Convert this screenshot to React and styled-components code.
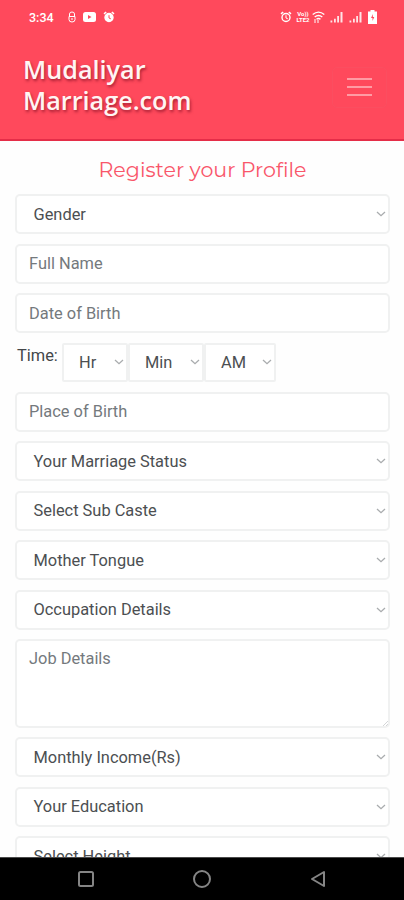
import React from "react";
import styled, { createGlobalStyle } from "styled-components";

const GlobalStyle = createGlobalStyle`
  * {
    box-sizing: border-box;
  }

  body {
    margin: 0;
    background-color: #fefefe;
    font-family: Roboto, "Liberation Sans", sans-serif;
  }
`;

const Screen = styled.div`
  display: flex;
  flex-direction: column;
  width: 404px;
  height: 900px;
  overflow: hidden;
`;

const Header = styled.header`
  flex: none;
  height: 141px;
  background-color: #ff495c;
  border-bottom: 2px solid #e52d48;
`;

const StatusBar = styled.div`
  display: flex;
  align-items: center;
  justify-content: space-between;
  height: 34px;
  padding: 0 27px 0 29px;
  color: #fff;
`;

const StatusGroup = styled.div`
  display: flex;
  align-items: center;
  gap: ${(props) => props.$gap};
`;

const Clock = styled.span`
  width: 32px;
  font-size: 12.5px;
  font-weight: 500;
`;

const Navbar = styled.nav`
  display: flex;
  align-items: center;
  justify-content: space-between;
  padding: 20px 17px 0 23px;
`;

const Brand = styled.div`
  display: flex;
  flex-direction: column;
  color: #fff5f4;
  font-family: "Open Sans", "Noto Sans", sans-serif;
  font-size: 25.2px;
  font-weight: 600;
  line-height: 30.5px;
  text-shadow: 1px 2px 3px rgba(120, 10, 30, 0.65);
`;

const Toggler = styled.button`
  display: flex;
  flex-direction: column;
  align-items: center;
  justify-content: center;
  gap: 6px;
  width: 55px;
  height: 41px;
  margin-top: 5px;
  padding: 0;
  border: 1px solid #fb4e60;
  border-radius: 5px;
  background: none;
`;

const TogglerLine = styled.span`
  width: 25px;
  height: 2px;
  background-color: #ff9ba4;
`;

const Form = styled.form`
  flex: 1;
  display: flex;
  flex-direction: column;
  gap: 9.4px;
  min-height: 0;
  padding: 16px 14px 0 15px;
  overflow: hidden;

  > * {
    flex: none;
  }
`;

const Title = styled.h1`
  margin: 0 0 3px;
  color: #f9566a;
  font-family: Montserrat, Inter, sans-serif;
  font-size: 20.6px;
  font-weight: 400;
  line-height: 25px;
  text-align: center;
`;

const Input = styled.input`
  width: 100%;
  height: 40px;
  padding: 0 12px;
  border: 2px solid #f0f1f1;
  border-radius: 5px;
  background-color: #fff;
  font-family: inherit;
  font-size: 16.4px;

  &::placeholder {
    color: #74797d;
    opacity: 1;
  }
`;

const TextArea = styled(Input)`
  height: 89px;
  padding: 8px 12px;
  line-height: 20px;
  resize: none;
`;

const TextAreaBox = styled.div`
  position: relative;
  display: flex;
`;

const Grip = styled.svg`
  position: absolute;
  right: 2px;
  bottom: 2px;
`;

const SelectBox = styled.div`
  display: flex;
  align-items: center;
  justify-content: space-between;
  width: ${(props) => props.$width || "100%"};
  height: ${(props) => (props.$width ? "39px" : "40px")};
  padding: 0 2px 0 ${(props) => (props.$width ? "15px" : "16.5px")};
  border: 2px solid #f0f1f1;
  border-radius: ${(props) => (props.$width ? "2px" : "5px")};
  background-color: #fff;
  color: #4c4f52;
  font-size: 16.4px;
`;

const TimeRow = styled.div`
  display: flex;
  height: 40px;
`;

const TimeLabel = styled.label`
  width: 47px;
  padding: 3px 0 0 2px;
  color: #434649;
  font-size: 16.4px;
  line-height: 20px;
`;

const NavigationBar = styled.footer`
  flex: none;
  display: flex;
  align-items: center;
  justify-content: space-between;
  height: 43px;
  padding: 0 76px;
  border-top: 1px solid #4a4a4a;
  background-color: #000;
`;

const Select = ({ label, width }) => (
  <SelectBox $width={width}>
    <span>{label}</span>
    <svg width="10" height="6" viewBox="0 0 10 6" fill="none">
      <path d="M1 1 5 4.7 9 1" stroke="#a9acae" strokeWidth="1.3" />
    </svg>
  </SelectBox>
);

const AlarmIcon = ({ filled }) => (
  <svg width="12" height="12" viewBox="0 0 12 12" fill="none" stroke="currentColor">
    <circle cx="6" cy="6.5" r="4" strokeWidth="1.4" fill={filled ? "currentColor" : "none"} />
    <path d="M1 2.8 3.2 1M11 2.8 8.8 1" strokeWidth="1.5" />
    <path d="M6 4.2V7l1.8.8" stroke={filled ? "#ff495c" : "currentColor"} />
  </svg>
);

const SignalIcon = () => (
  <svg width="13" height="12" viewBox="0 0 13 12" fill="currentColor" opacity="0.85">
    <path d="M.5 9.5h1.8v2H.5zM4 7.8h1.8v3.7H4zM7.2 5h1.8v6.5H7.2zM10.5 1h2v10.5h-2z" />
  </svg>
);

const VolteLabel = styled.span`
  display: flex;
  flex-direction: column;
  align-items: center;
  width: 14px;
  font-size: 6px;
  font-weight: 700;
  line-height: 6.5px;
`;

const SignalGroup = styled(StatusGroup)`
  margin-left: 1px;
`;

const App = () => {
  return (
    <Screen>
      <GlobalStyle />
      <Header>
        <StatusBar>
          <StatusGroup $gap="7px">
            <Clock>3:34</Clock>
            <svg width="8" height="12" viewBox="0 0 8 12" fill="none" stroke="currentColor">
              <path d="M1.5 5V3Q1.5 1 4 1t2.5 2v2M1 5.5h6v3Q7 11 4 11T1 8.500Z" />
              <path d="M3 8h2" />
            </svg>
            <svg width="13" height="10" viewBox="0 0 13 10">
              <rect width="13" height="10" rx="2.500" fill="currentColor" />
              <path d="m5 3 3.500 2L5 7z" fill="#ff495c" />
            </svg>
            <AlarmIcon filled />
          </StatusGroup>
          <StatusGroup $gap="4px">
            <AlarmIcon />
            <StatusGroup $gap="2px">
              <VolteLabel>
                <span>Vo))</span>
                <span>LTE2</span>
              </VolteLabel>
              <svg width="13" height="12" viewBox="0 0 13 12" fill="none" stroke="currentColor">
                <path
                  d="M.7 3.5Q6.5-1.2 12.3 3.5M2.700 6Q6.500 3 10.300 6M4.500 8.300Q6.500 6.800 8.500 8.300"
                  strokeWidth="1.4"
                />
                <path d="M3 8v4M6 9v3" />
              </svg>
            </StatusGroup>
            <SignalGroup $gap="6px">
              <SignalIcon />
              <SignalIcon />
              <svg width="9" height="14" viewBox="0 0 9 14">
                <path d="M2.500 0h4v1.500H9V14H0V1.500h2.500z" fill="currentColor" />
                <path d="M5 4 3 8h1.500v3L6.300 7H4.800z" fill="#ff495c" />
              </svg>
            </SignalGroup>
          </StatusGroup>
        </StatusBar>
        <Navbar>
          <Brand>
            <span>Mudaliyar</span>
            <span>Marriage.com</span>
          </Brand>
          <Toggler type="button" aria-label="Menu">
            <TogglerLine />
            <TogglerLine />
            <TogglerLine />
          </Toggler>
        </Navbar>
      </Header>

      <Form>
        <Title>Register your Profile</Title>
        <Select label="Gender" />
        <Input name="fullName" placeholder="Full Name" />
        <Input name="birthDate" placeholder="Date of Birth" />
        <TimeRow>
          <TimeLabel>Time:</TimeLabel>
          <Select label="Hr" width="66px" />
          <Select label="Min" width="76px" />
          <Select label="AM" width="72px" />
        </TimeRow>
        <Input name="birthPlace" placeholder="Place of Birth" />
        <Select label="Your Marriage Status" />
        <Select label="Select Sub Caste" />
        <Select label="Mother Tongue" />
        <Select label="Occupation Details" />
        <TextAreaBox>
          <TextArea as="textarea" name="job" placeholder="Job Details" />
          <Grip width="5" height="5" viewBox="0 0 5 5" fill="none">
            <path d="M0 5 5 0M3 5l2-2" stroke="#d4d6d8" />
          </Grip>
        </TextAreaBox>
        <Select label="Monthly Income(Rs)" />
        <Select label="Your Education" />
        <Select label="Select Height" />
      </Form>

      <NavigationBar>
        <svg width="20" height="20" viewBox="0 0 20 20" fill="none">
          <rect x="3" y="3" width="14" height="14" rx="1.500" stroke="#858585" strokeWidth="2" />
        </svg>
        <svg width="20" height="20" viewBox="0 0 20 20" fill="none">
          <circle cx="10" cy="10" r="8" stroke="#858585" strokeWidth="2" />
        </svg>
        <svg width="20" height="20" viewBox="0 0 20 20" fill="none">
          <path d="M16 3v14L4 10z" stroke="#858585" strokeWidth="2" strokeLinejoin="round" />
        </svg>
      </NavigationBar>
    </Screen>
  );
};

export default App;
